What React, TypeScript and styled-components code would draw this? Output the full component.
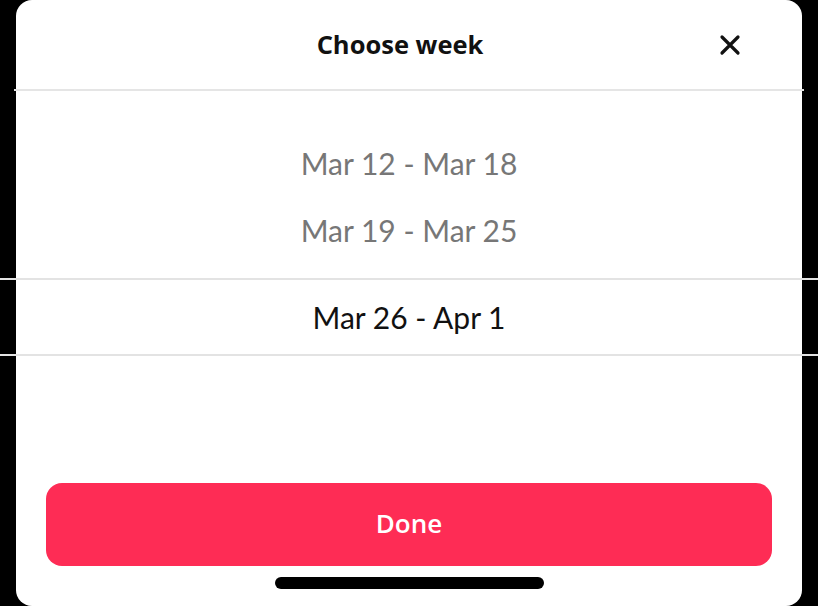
import styled, { createGlobalStyle } from "styled-components";

const GlobalStyle = createGlobalStyle`
  html, body {
    margin: 0;
    padding: 0;
    background: #000;
  }
  body {
    font-family: Lato, "Open Sans", sans-serif;
    -webkit-font-smoothing: antialiased;
  }
`;

const Sheet = styled.div`
  margin: 0 16px;
  height: 606px;
  background: #fff;
  border-radius: 16px;
  display: flex;
  flex-direction: column;
`;

const Header = styled.header`
  height: 89px;
  border-bottom: 2px solid #e5e5e5;
  margin: 0 -2px;
  display: grid;
  grid-template-columns: 1fr auto 1fr;
  align-items: center;
`;

const Title = styled.h1`
  grid-column: 2;
  margin: 0 18px 2px 0;
  font-family: "Open Sans", sans-serif;
  font-size: 25.5px;
  font-weight: 700;
  color: #111;
`;

const CloseButton = styled.button`
  justify-self: end;
  margin-right: 59px;
  width: 30px;
  height: 30px;
  padding: 0;
  border: none;
  background: none;
  display: flex;
  align-items: center;
  justify-content: center;
  cursor: pointer;
`;

const Picker = styled.div`
  padding-top: 38px;
  display: flex;
  flex-direction: column;
`;

const Option = styled.div<{ $selected?: boolean }>`
  height: ${(p) => (p.$selected ? "74px" : "67px")};
  display: flex;
  align-items: center;
  justify-content: center;
  font-size: 30px;
  color: ${(p) => (p.$selected ? "#111" : "#777")};
  ${(p) =>
    p.$selected &&
    `
    margin: 15px -16px 0;
    border-top: 2px solid #e3e3e3;
    border-bottom: 2px solid #e3e3e3;
  `}
`;

const Footer = styled.footer`
  margin-top: auto;
  padding: 0 30px 17px;
  display: flex;
  flex-direction: column;
  align-items: center;
`;

const DoneButton = styled.button`
  width: 100%;
  height: 83px;
  padding: 0 0 4px;
  border: none;
  border-radius: 16px;
  background: #fe2c55;
  color: #fff;
  font-family: "Open Sans", sans-serif;
  font-size: 26px;
  font-weight: 600;
  cursor: pointer;
`;

const HomeIndicator = styled.div`
  margin-top: 11px;
  width: 269px;
  height: 12px;
  border-radius: 6px;
  background: #000;
`;

const weeks = [
  { label: "Mar 12 - Mar 18" },
  { label: "Mar 19 - Mar 25" },
  { label: "Mar 26 - Apr 1", selected: true },
];

export default function App() {
  return (
    <>
      <GlobalStyle />
      <Sheet>
        <Header>
          <Title>Choose week</Title>
          <CloseButton aria-label="Close">
            <svg width="22" height="22" viewBox="0 0 22 22">
              <path
                d="M3 3 L19 19 M19 3 L3 19"
                stroke="#111"
                strokeWidth="3.2"
                strokeLinecap="round"
              />
            </svg>
          </CloseButton>
        </Header>
        <Picker>
          {weeks.map((w) => (
            <Option key={w.label} $selected={w.selected}>
              {w.label}
            </Option>
          ))}
        </Picker>
        <Footer>
          <DoneButton>Done</DoneButton>
          <HomeIndicator />
        </Footer>
      </Sheet>
    </>
  );
}
